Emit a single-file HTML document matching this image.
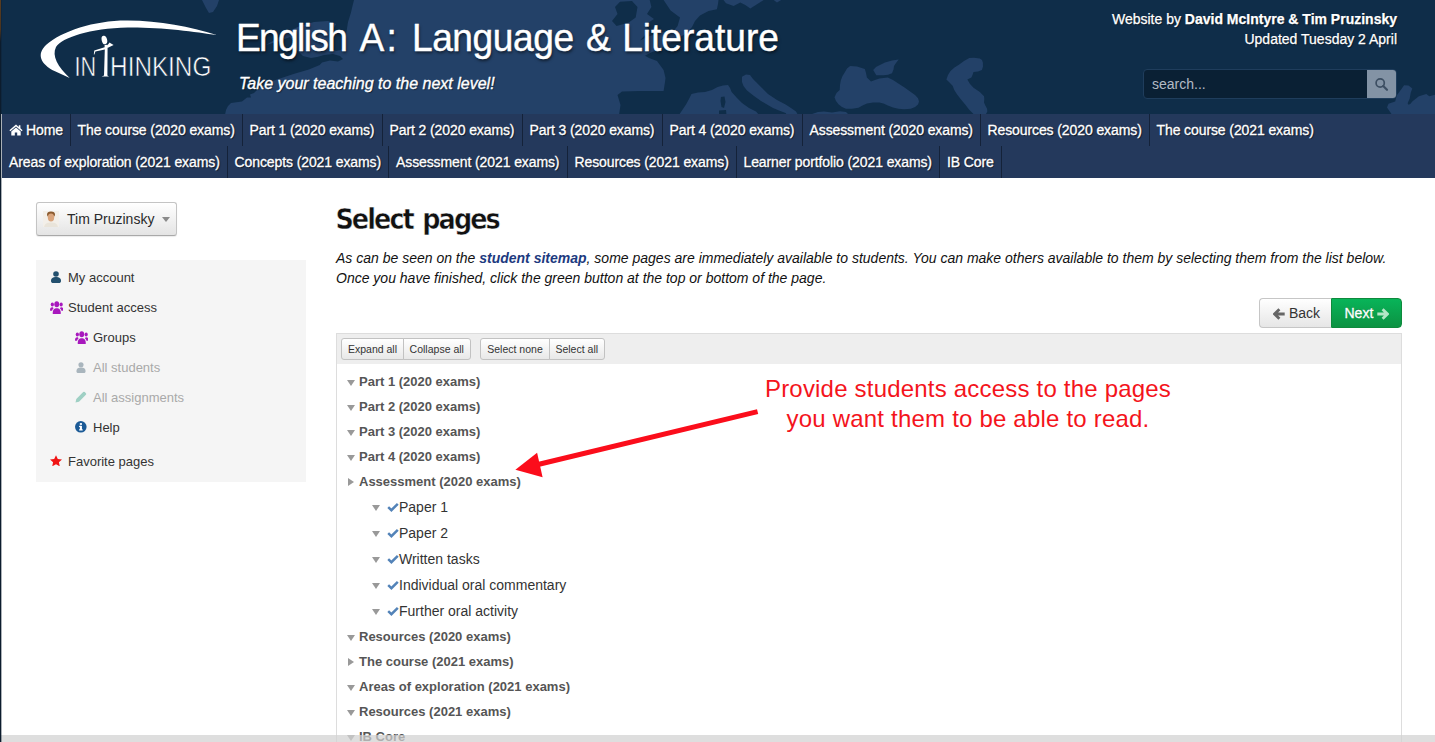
<!DOCTYPE html>
<html lang="en">
<head>
<meta charset="utf-8">
<title>Select pages</title>
<style>
*{box-sizing:border-box;margin:0;padding:0}
html,body{width:1435px;height:742px;overflow:hidden;background:#fff}
body{font-family:"Liberation Sans",sans-serif;color:#222;position:relative}
#edge{position:absolute;left:0;top:0;width:2px;height:742px;background:linear-gradient(90deg,#0c1c2d 0,#0c1c2d 50%,rgba(12,28,45,.35) 50%);z-index:50}
#edge i{display:block;width:1px;height:42px;background:linear-gradient(#5a3d20,#4a331e 70%,#0c1c2d)}
#header{position:absolute;left:0;top:0;width:1435px;height:114px;background:#0f2d49;overflow:hidden}
#map{position:absolute;left:0;top:0}
#logo{position:absolute;left:38px;top:18px}
#title{-webkit-text-stroke:0.4px #fff;position:absolute;left:236px;top:14px;transform:scaleX(.952);transform-origin:0 0;font-size:39px;line-height:48px;color:#fff;white-space:nowrap;text-shadow:1px 2px 3px rgba(0,0,0,.55);letter-spacing:0px}
#sub{-webkit-text-stroke:0.35px #fff;position:absolute;left:239px;top:74px;font-size:16px;line-height:20px;font-style:italic;color:#fff;white-space:nowrap;text-shadow:1px 1px 1px rgba(0,0,0,.5)}
#by{-webkit-text-stroke:0.25px #fff;position:absolute;right:38px;top:9px;text-align:right;font-size:14px;line-height:20px;color:#fff;white-space:nowrap;text-shadow:1px 1px 1px rgba(0,0,0,.5)}
#search{position:absolute;left:1143px;top:69px;width:254px;height:30px;border:1px solid #1f3d5c;border-radius:4px;background:#0a2034;overflow:hidden}
#search span{position:absolute;left:8px;top:5px;font-size:14px;line-height:18px;color:#b3bbc4}
#search b{position:absolute;right:0;top:0;width:29px;height:28px;background:#8393a5}
#nav{position:absolute;left:2px;top:114px;width:1433px;height:64px;background:#24395c}
.row{height:32px;white-space:nowrap;display:flex}
.row a{-webkit-text-stroke:0.3px #fff;display:block;height:32px;line-height:32px;padding:0 0 0 7px;font-size:14px;letter-spacing:-0.1px;white-space:nowrap;overflow:hidden;color:#fff;border-right:1px solid #142239;text-shadow:1px 1px 1px rgba(0,0,0,.6);text-decoration:none}

.row a.home{padding-left:24px;position:relative}
.row a.home svg{position:absolute;left:6.6px;top:10px}
#user{position:absolute;left:36px;top:202px;width:141px;height:34px;border:1px solid #c4c4c4;border-bottom-color:#a9a9a9;border-radius:3px;background:linear-gradient(#ffffff,#e4e4e4);box-shadow:0 1px 1px rgba(0,0,0,.08)}
#user .av{position:absolute;left:6px;top:8px;width:16px;height:16px}
#user span{position:absolute;left:30px;top:7px;font-size:14px;line-height:18px;color:#2a2a2a;white-space:nowrap}
#user em{position:absolute;left:125px;top:14px;width:0;height:0;border-left:4.5px solid transparent;border-right:4.5px solid transparent;border-top:5px solid #8a8a8a}
#side{position:absolute;left:36px;top:260px;width:270px;height:222px;background:#f5f5f5}
#side div{position:absolute;left:32px;font-size:13px;line-height:20px;color:#333;white-space:nowrap}
#side div.sub{left:57px}
#side div.dim{color:#a9a9a9}
#side svg{position:absolute}
h1{position:absolute;left:335.4px;top:201.7px;font-family:"DejaVu Sans Condensed","Liberation Sans",sans-serif;font-weight:bold;font-size:28.4px;line-height:36px;color:#111;white-space:nowrap;letter-spacing:-1.95px;word-spacing:2.5px;-webkit-text-stroke:0.45px #fff}
#intro{position:absolute;left:336px;top:248px;width:1080px;font-size:14px;line-height:20px;font-style:italic;color:#111;white-space:nowrap}
#intro b{color:#1d3a80}
#btns{position:absolute;left:1259px;top:298px;width:143px;height:30px}
#back{position:absolute;left:0;top:0;width:72px;height:30px;border:1px solid #c6c6c6;border-right:0;border-radius:4px 0 0 4px;background:linear-gradient(#fff,#e6e6e6);font-size:14px;line-height:28px;color:#333}
#back span{position:absolute;left:29px;top:0}
#next{position:absolute;left:72px;top:0;width:71px;height:30px;border:1px solid #0e8a3c;border-radius:0 4px 4px 0;background:linear-gradient(#08b459,#0c9242);font-size:14px;line-height:28px;color:#fff;text-shadow:0 -1px 0 rgba(0,0,0,.25)}
#next span{position:absolute;left:12.5px;top:0;-webkit-text-stroke:0.3px #fff}
#btns svg{position:absolute}
#panel{position:absolute;left:336px;top:333px;width:1066px;height:420px;border:1px solid #ddd;border-bottom:0}
#tool{position:absolute;left:0;top:0;width:1064px;height:30px;background:#eee}
.tb{position:absolute;top:4px;height:22px;border:1px solid #c2c2c2;background:linear-gradient(#fff,#e8e8e8);font-size:10.5px;line-height:20px;color:#333;text-align:center;white-space:nowrap}
.t1{position:absolute;left:359px;font-size:13px;line-height:16px;font-weight:bold;color:#555;white-space:nowrap}
.t2{position:absolute;left:399px;font-size:14px;line-height:18px;color:#333;white-space:nowrap}
.ar{position:absolute;width:0;height:0}
.ar.d{border-left:4px solid transparent;border-right:4px solid transparent;border-top:6px solid #999}
.ar.r{border-top:4px solid transparent;border-bottom:4px solid transparent;border-left:6px solid #999}
.ck{position:absolute}
#note{position:absolute;left:718px;top:374px;width:500px;text-align:center;font-size:24px;line-height:30px;color:#f4141c;white-space:nowrap;letter-spacing:0.2px}
#arrow{position:absolute;left:0;top:0;pointer-events:none}
#fade{position:absolute;left:0;top:735px;width:1435px;height:7px;background:rgba(209,209,209,.72)}
</style>
</head>
<body>
<div id="header">
<svg id="map" width="1435" height="114" viewBox="0 0 1435 114"><path d="M354 0 L352 8 L351 12.5 L348 22 L346 35 L344 46 L341 50 L336 51 L331 49 L330 42 L332 32 L336 24 L328 21 L314 22 L300 26 L289 31 L276 39 L266 45 L278 41.5 L290 37 L294 42 L297 50 L303 56 L311 58 L317 57 L324 55 L333 54 L340 56 L343 59 L338 61.5 L330 60.5 L322 62.5 L319.7 65 L308.9 69.5 L293.5 74 L280 78.5 L277 79.5 L270 82 L265 84.5 L258 89 L254 93 L250 94.5 L251 97.5 L247 97.5 L242 101.5 L231 103 L228 106 L226 110 L225 115 L619 115 L620.5 105 L617.5 95 L622 91.5 L640 91 L663.6 91 L665 82 L665.5 78 L663.6 70 L657 61 L649 58 L645 55.7 L652 52 L660 50 L664 46 L672 42 L680 37 L687 33 L692 27 L695 21 L700 15.5 L708.5 11 L716.9 9.2 L718 4 L718.5 0Z" fill="#234168"/><path d="M620 1.7 L632 1 L637.5 7 L635.7 17.4 L628.8 22.6 L616.6 26 L612 21 L617.5 14 L615 7Z M649.7 0 L663.6 0 L670.6 10.5 L680 17.4 L677.6 26 L674 30.5 L658.4 33 L647 37 L640 40.4 L645 35 L649.7 31 L645.3 24.4 L654 19 L647 14 L651.4 7Z" fill="#0f2d49"/><path d="M679 115 L683 109 L686 104.5 L689 99 L691.5 94 L698 92.5 L705 92 L712 90 L717.6 87 L723 85.5 L728 85 L730 88 L731.6 92 L737 98 L742 103 L749 108 L756 111.5 L759 115Z" fill="#234168"/><path d="M742 76.7 L746 74.5 L750 75 L753 79 L756 82 L762 88 L768 94 L777 100 L785.6 104.5 L791 108 L796 111.5 L798 115 L787 115 L785.6 113 L779 110.5 L773 108 L767 104.5 L761 101 L754 96 L747 90.6 L743.5 86 L742 82Z" fill="#234168"/><path d="M723.5 0 L726 3.3 L733.6 5.9 L740.3 2.5 L745.3 5 L750.3 8.4 L757 4.2 L763.7 0Z" fill="#234168"/><path d="M773.7 0 L777 2.5 L781.2 0Z" fill="#234168"/><path d="M850.2 65.9 L857 66.5 L864.8 69 L866 73 L866.9 77.4 L871 81.5 L875 80 L879.4 78.4 L887.8 77.4 L893 80 L898.3 83.6 L904.5 87.5 L910.8 92 L915 95 L918 98.3 L919 101.5 L918 104.5 L915 107 L910.8 108.7 L904 109.3 L898.3 108.7 L893 107.5 L887.8 105.6 L883.5 103.5 L879.4 102.4 L873 102.5 L866.9 103.5 L862.5 105.5 L858.5 107.7 L852 108.7 L846 108.7 L842 107 L838.7 104.5 L836 101 L834.5 97.2 L836.5 93 L839.7 89.9 L840 85 L840.8 80.5 L842.5 76 L845 72.1 L847 68.5Z" fill="#234168"/><path d="M873.2 70 L876 67 L879.4 65.2 L885 62.5 L892 60.6 L898.7 59.6 L896 63 L894 65.9 L893.5 69.5 L892 73.2 L888 74.7 L883.6 75.3 L876.3 75.3Z" fill="#234168"/><path d="M969.3 58.1 L974 57.8 L979.8 58.5 L982 60 L982.9 62.7 L983 66.5 L981.9 70 L978 71.5 L973.5 72.1 L972.5 75 L971.4 77.4 L967.3 79.4 L970 84 L973.5 87.8 L979.8 92 L984 96.2 L984.3 99 L984 102.4 L985.3 105.5 L987.1 108.7 L987.3 111.5 L986 114 L973.5 114 L969 109.5 L965.2 104.5 L961 99.5 L956.8 94 L954.3 90 L952.6 85.7 L949.5 82.5 L946.4 79.4 L948 75 L950.5 71 L954.5 67.5 L958.9 64.8 L964 61Z" fill="#234168"/><path d="M1404.1 85.2 L1408.5 85.6 L1412.3 88.5 L1410.8 92.6 L1409.7 98.5 L1407.6 103.2 L1408.5 104.8 L1410.3 104 L1412.3 101.5 L1418.9 96.3 L1426.3 94.1 L1429.3 96.3 L1435 94.8 L1435 114 L1391.5 114 L1387 107.4 L1388.5 103.7 L1395.2 101.5 L1396.7 95.6 L1401.1 89.6Z" fill="#234168"/><path d="M812 114 L818 112 L824 111.5 L832 112.5 L840 111.3 L846 112 L848 114Z" fill="#234168"/><path d="M202 0 L219 0 L217 6 L213 12 L209 13 L206 8Z" fill="#234168"/><path d="M721 97 L724.5 96.5 L725.5 102 L724 108 L721.5 107 L720.5 101Z M719 110.5 L726 110 L726.5 115 L719 115Z" fill="#0f2d49"/><g fill="#fff"><path d="M216.8 35.1 C190 26.5 160 20.8 127.6 20.5 C95 20.2 62 31 46 45 C36.5 54 40 64 55 71.3 L69.7 77.9 C58 67 51.5 56 56 47 C62 37.5 90 28 127.6 27.4 C160 27 195 31.5 216.8 35.1Z"/>
<ellipse cx="104.4" cy="40" rx="2.7" ry="4.3" transform="rotate(-14 104.4 40)"/>
<path d="M104.6 45 L107.6 44.8 L107.4 75.6 L109 76.6 L101.6 76.6 L104 75.5 L104.8 49.4 L95.4 51.6 L94.4 54.6 L93.8 54.4 L94.3 50.4 L104.6 47.3Z"/>
<path d="M106.8 46 L109.6 42.6 L110.6 43.2 L113.6 44.9 L107.4 48Z"/></g>
<text x="74.4" y="75.7" font-family="'Liberation Sans',sans-serif" font-size="27" fill="#fff" stroke="#0f2d49" stroke-width="0.55" textLength="21.6" lengthAdjust="spacingAndGlyphs">IN</text>
<text x="110.1" y="75.7" font-family="'Liberation Sans',sans-serif" font-size="27" fill="#fff" stroke="#0f2d49" stroke-width="0.55" textLength="101.2" lengthAdjust="spacingAndGlyphs">HINKING</text></svg>
<div id="title"><span id="tw1" style="letter-spacing:-1.75px">English</span><span id="tw2" style="margin-left:5.5px"> A</span><span id="tw3" style="margin-left:2.2px">:</span><span id="tw4" style="margin-left:5.5px;letter-spacing:-0.45px"> Language</span><span id="tw5" style="margin-left:2.2px"> &amp;</span><span id="tw6" style="margin-left:1px"> Literature</span></div>
<div id="sub">Take your teaching to the next level!</div>
<div id="by">Website by <strong>David McIntyre &amp; Tim Pruzinsky</strong><br>Updated Tuesday 2 April</div>
<div id="search"><span>search...</span><b><svg width="29" height="28" viewBox="0 0 29 28"><circle cx="13.2" cy="13" r="4.1" fill="none" stroke="#3d4f63" stroke-width="1.7"/><path d="M16.2 16 L20 19.8" stroke="#3d4f63" stroke-width="2.2" stroke-linecap="round"/></svg></b></div>
</div>
<div id="nav">
<div class="row"><a class="home" style="width:68.5px"><svg width="14" height="12" viewBox="0 0 14 12"><path d="M7 0.6 L0.4 6.2 L1.3 7.2 L7 2.5 L12.7 7.2 L13.6 6.2 L11.4 4.3 L11.4 1.2 L9.8 1.2 L9.8 3Z M7 3.6 L2.3 7.5 L2.3 11.6 L5.8 11.6 L5.8 8.4 L8.2 8.4 L8.2 11.6 L11.7 11.6 L11.7 7.5Z" fill="#fff"/></svg>Home</a><a style="width:172px">The course (2020 exams)</a><a style="width:140px">Part 1 (2020 exams)</a><a style="width:140px">Part 2 (2020 exams)</a><a style="width:140px">Part 3 (2020 exams)</a><a style="width:140px">Part 4 (2020 exams)</a><a style="width:178px">Assessment (2020 exams)</a><a style="width:169px">Resources (2020 exams)</a><a style="width:172px;border:0">The course (2021 exams)</a></div>
<div class="row"><a style="width:225.5px">Areas of exploration (2021 exams)</a><a style="width:161.5px">Concepts (2021 exams)</a><a style="width:178.5px">Assessment (2021 exams)</a><a style="width:169px">Resources (2021 exams)</a><a style="width:203.5px">Learner portfolio (2021 exams)</a><a style="width:61.5px">IB Core</a></div>
</div>

<div id="user"><svg class="av" viewBox="0 0 16 16"><rect width="16" height="16" fill="#f3efe9"/><ellipse cx="8" cy="3.6" rx="4" ry="3" fill="#8a5a2e"/><ellipse cx="8" cy="6.4" rx="3.2" ry="4" fill="#d9a47c"/><path d="M1 16 C2 12 5 11.5 8 11.5 C11 11.5 14 12 15 16Z" fill="#e9e4da"/></svg><span>Tim Pruzinsky</span><em></em></div>
<div id="side">
<svg style="left:15px;top:11px" width="10" height="12" viewBox="0 0 10 12"><circle cx="5" cy="3" r="2.8" fill="#23506e"/><path d="M0 10 C0 7 2 6 5 6 C8 6 10 7 10 10 C10 11.5 9 12 8 12 L2 12 C1 12 0 11.5 0 10Z" fill="#23506e"/></svg>
<div style="top:8px">My account</div>
<svg style="left:13.5px;top:40.5px" width="13.5" height="13" viewBox="0 0 15 12" preserveAspectRatio="none"><g fill="#a818bd"><circle cx="7.5" cy="3" r="2.7"/><path d="M3 11.5 C3 8 4.5 6.6 7.5 6.6 C10.5 6.6 12 8 12 11.5 Q12 12 11 12 L4 12 Q3 12 3 11.5Z"/><circle cx="2.6" cy="3.2" r="1.8"/><circle cx="12.4" cy="3.2" r="1.8"/><path d="M0 8.5 C0 6.5 1 5.6 3 5.8 C3.4 6.2 3.6 6.4 4 6.6 C3 7.2 2.4 8 2.3 9 L0.8 9 Q0 9 0 8.5Z"/><path d="M15 8.5 C15 6.5 14 5.6 12 5.8 C11.6 6.2 11.4 6.4 11 6.6 C12 7.2 12.6 8 12.7 9 L14.2 9 Q15 9 15 8.5Z"/></g></svg>
<div style="top:38px">Student access</div>
<svg style="left:38.5px;top:70.5px" width="13.5" height="13" viewBox="0 0 15 12" preserveAspectRatio="none"><g fill="#a818bd"><circle cx="7.5" cy="3" r="2.7"/><path d="M3 11.5 C3 8 4.5 6.6 7.5 6.6 C10.5 6.6 12 8 12 11.5 Q12 12 11 12 L4 12 Q3 12 3 11.5Z"/><circle cx="2.6" cy="3.2" r="1.8"/><circle cx="12.4" cy="3.2" r="1.8"/><path d="M0 8.5 C0 6.5 1 5.6 3 5.8 C3.4 6.2 3.6 6.4 4 6.6 C3 7.2 2.4 8 2.3 9 L0.8 9 Q0 9 0 8.5Z"/><path d="M15 8.5 C15 6.5 14 5.6 12 5.8 C11.6 6.2 11.4 6.4 11 6.6 C12 7.2 12.6 8 12.7 9 L14.2 9 Q15 9 15 8.5Z"/></g></svg>
<div class="sub" style="top:68px">Groups</div>
<svg style="left:40px;top:102px" width="10" height="11" viewBox="0 0 10 12"><circle cx="5" cy="3" r="2.8" fill="#a9b5bd"/><path d="M0 10 C0 7 2 6 5 6 C8 6 10 7 10 10 C10 11.5 9 12 8 12 L2 12 C1 12 0 11.5 0 10Z" fill="#a9b5bd"/></svg>
<div class="sub dim" style="top:98px">All students</div>
<svg style="left:39px;top:131px" width="12" height="12" viewBox="0 0 12 12"><path d="M0.5 11.5 L1.3 8 L8.2 1.1 Q9 0.3 9.8 1.1 L10.9 2.2 Q11.7 3 10.9 3.8 L4 10.7Z" fill="#9fd0c4"/></svg>
<div class="sub dim" style="top:128px">All assignments</div>
<svg style="left:39.2px;top:161.2px" width="11.6" height="11.6" viewBox="0 0 12 12"><circle cx="6" cy="6" r="6" fill="#1b5a96"/><rect x="5" y="5" width="2.2" height="4.4" fill="#fff"/><rect x="4.2" y="5" width="2" height="1.2" fill="#fff"/><rect x="4.2" y="8.6" width="3.8" height="1.2" fill="#fff"/><rect x="5" y="2.2" width="2.2" height="1.8" fill="#fff"/></svg>
<div class="sub" style="top:158px">Help</div>
<svg style="left:14px;top:194.5px" width="12" height="11.5" viewBox="0 0 14 13"><path d="M7 0 L9.1 4.4 L14 5 L10.4 8.3 L11.4 13 L7 10.6 L2.6 13 L3.6 8.3 L0 5 L4.9 4.4Z" fill="#f01414"/></svg>
<div style="top:192px">Favorite pages</div>
</div>
<h1>Select pages</h1>
<div id="intro">As can be seen on the <b>student sitemap</b>, some pages are immediately available to students. You can make others available to them by selecting them from the list below.<br>Once you have finished, click the green button at the top or bottom of the page.</div>
<div id="btns"><div id="back"><svg style="left:12.6px;top:8.5px" width="12" height="12" viewBox="0 0 12 12"><path d="M6.4 1.2 L1.6 6 L6.4 10.8 M2 6 L11.7 6" fill="none" stroke="#666" stroke-width="2.8"/></svg><span>Back</span></div><div id="next"><span>Next</span><svg style="left:44.6px;top:8.5px" width="12" height="12" viewBox="0 0 12 12"><path d="M5.6 1.2 L10.4 6 L5.6 10.8 M10 6 L0.3 6" fill="none" stroke="#b4e6c6" stroke-width="2.8"/></svg></div></div>
<div id="panel"><div id="tool">
<div class="tb" style="left:4px;width:63px;border-radius:3px 0 0 3px">Expand all</div><div class="tb" style="left:66px;width:67.5px;border-radius:0 3px 3px 0">Collapse all</div>
<div class="tb" style="left:143px;width:70px;border-radius:3px 0 0 3px">Select none</div><div class="tb" style="left:212px;width:55.5px;border-radius:0 3px 3px 0">Select all</div>
</div></div>
<i class="ar d" style="left:347px;top:380px"></i>
<div class="t1" style="top:374px">Part 1 (2020 exams)</div>
<i class="ar d" style="left:347px;top:405px"></i>
<div class="t1" style="top:399px">Part 2 (2020 exams)</div>
<i class="ar d" style="left:347px;top:430px"></i>
<div class="t1" style="top:424px">Part 3 (2020 exams)</div>
<i class="ar d" style="left:347px;top:455px"></i>
<div class="t1" style="top:449px">Part 4 (2020 exams)</div>
<i class="ar r" style="left:348px;top:478px"></i>
<div class="t1" style="top:474px">Assessment (2020 exams)</div>
<i class="ar d" style="left:372px;top:505px"></i>
<svg class="ck" style="left:387px;top:502px" width="12" height="10" viewBox="0 0 12 10"><path d="M1.2 5.2 L4.4 8.2 L10.8 1.8" fill="none" stroke="#5383b8" stroke-width="2.5"/></svg>
<div class="t2" style="top:498px">Paper 1</div>
<i class="ar d" style="left:372px;top:531px"></i>
<svg class="ck" style="left:387px;top:528px" width="12" height="10" viewBox="0 0 12 10"><path d="M1.2 5.2 L4.4 8.2 L10.8 1.8" fill="none" stroke="#5383b8" stroke-width="2.5"/></svg>
<div class="t2" style="top:524px">Paper 2</div>
<i class="ar d" style="left:372px;top:557px"></i>
<svg class="ck" style="left:387px;top:554px" width="12" height="10" viewBox="0 0 12 10"><path d="M1.2 5.2 L4.4 8.2 L10.8 1.8" fill="none" stroke="#5383b8" stroke-width="2.5"/></svg>
<div class="t2" style="top:550px">Written tasks</div>
<i class="ar d" style="left:372px;top:583px"></i>
<svg class="ck" style="left:387px;top:580px" width="12" height="10" viewBox="0 0 12 10"><path d="M1.2 5.2 L4.4 8.2 L10.8 1.8" fill="none" stroke="#5383b8" stroke-width="2.5"/></svg>
<div class="t2" style="top:576px">Individual oral commentary</div>
<i class="ar d" style="left:372px;top:609px"></i>
<svg class="ck" style="left:387px;top:606px" width="12" height="10" viewBox="0 0 12 10"><path d="M1.2 5.2 L4.4 8.2 L10.8 1.8" fill="none" stroke="#5383b8" stroke-width="2.5"/></svg>
<div class="t2" style="top:602px">Further oral activity</div>
<i class="ar d" style="left:347px;top:635px"></i>
<div class="t1" style="top:629px">Resources (2020 exams)</div>
<i class="ar r" style="left:348px;top:658px"></i>
<div class="t1" style="top:654px">The course (2021 exams)</div>
<i class="ar d" style="left:347px;top:685px"></i>
<div class="t1" style="top:679px">Areas of exploration (2021 exams)</div>
<i class="ar d" style="left:347px;top:710px"></i>
<div class="t1" style="top:704px">Resources (2021 exams)</div>
<i class="ar d" style="left:347px;top:735px"></i>
<div class="t1" style="top:729px">IB Core</div>
<div id="note">Provide students access to the pages<br>you want them to be able to read.</div>
<svg id="arrow" width="1435" height="742" viewBox="0 0 1435 742"><path d="M757.6 411.6 L538 464.5" stroke="#fb0d1b" stroke-width="5" fill="none"/><path d="M515.4 469.8 L537.1 452.8 L542.6 477.2Z" fill="#fb0d1b"/></svg>
<div id="fade"></div>
<div id="edge"><i></i></div>
</body>
</html>
